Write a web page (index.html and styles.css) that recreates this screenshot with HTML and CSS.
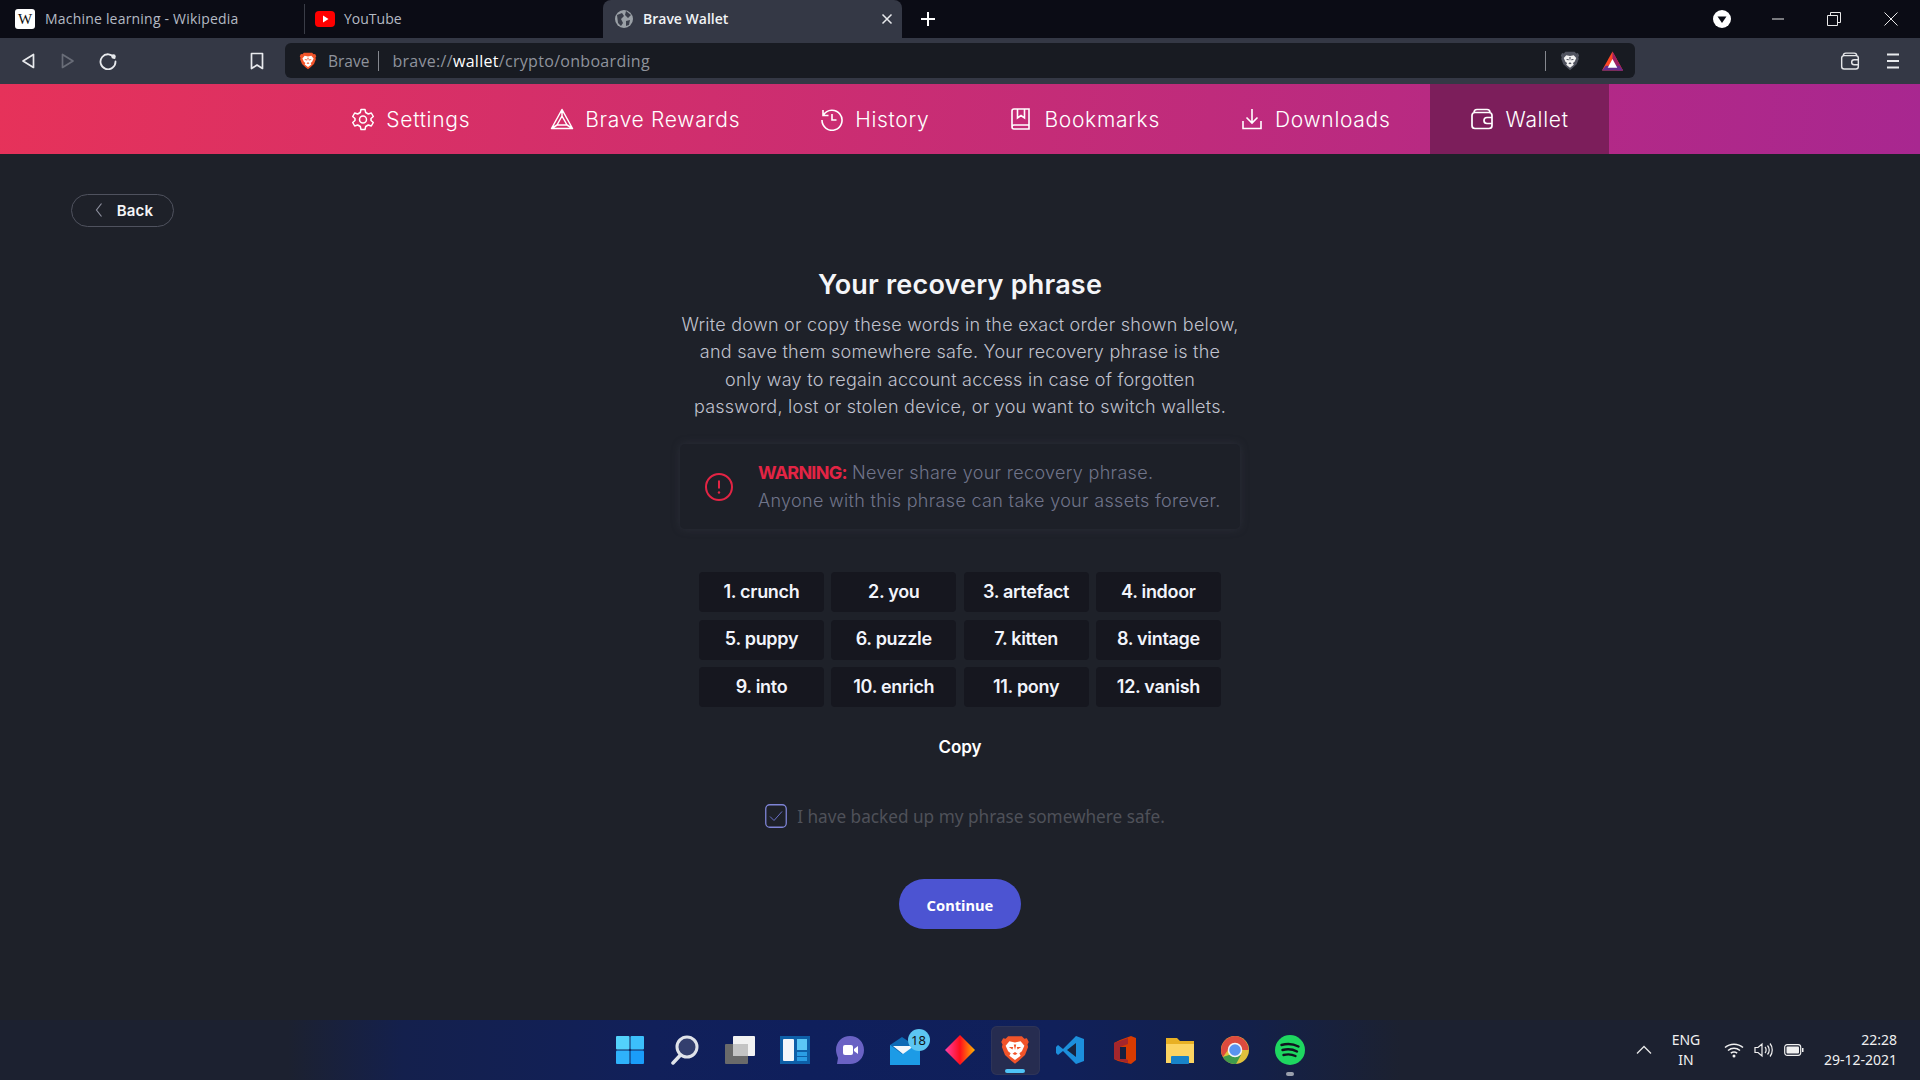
FILE: index.html
```html
<!DOCTYPE html>
<html lang="en">
<head>
<meta charset="utf-8">
<title>Brave Wallet</title>
<link rel="stylesheet" href="styles.css">
</head>
<body>
<svg class="defs" width="0" height="0" aria-hidden="true">
  <symbol id="brave" viewBox="0 0 24 24">
    <path class="shield" d="M6.500 1H17.500L19.500 3L21.500 2.500L23 5.500L22 7.500L22.500 9.500L20 16L15 20.500L12 23L9 20.500L4 16L1.500 9.500L2 7.500L1 5.500L2.500 2.500L4.500 3Z"/>
    <path class="lion" d="M7.500 5L12 6L16.500 5L19.500 8.500L17.500 13L15.500 14.500L16.500 16.500L12 20L7.500 16.500L8.500 14.500L6.500 13L4.500 8.500Z"/>
    <path class="shield" d="M7 9.500L10.500 9.500L10 11.500ZM17 9.500L13.500 9.500L14 11.500ZM10 15L12 16L14 15L12 13.500ZM11 7.500H13L12 12Z"/>
  </symbol>
  <symbol id="wallet" viewBox="0 0 24 24">
    <path d="M5 5.500C3 5.500 2 6.500 2 8.500V18.500C2 20.500 3 21.500 5 21.500H19C21 21.500 22 20.500 22 18.500V8.500C22 6.500 21 5.500 19 5.500Z M4 5.500C4 3.500 5 2.500 7 2.500H17C19 2.500 20 3.500 20 5.500 M22 10.500H17C15 10.500 14 11.500 14 13.500C14 15.500 15 16.500 17 16.500H22" fill="none" stroke="currentColor" stroke-width="1.700"/>
  </symbol>
</svg>

<header class="tabstrip">
  <div class="tab tab-first">
    <span class="wiki">W</span>
    <span class="tab-title">Machine learning - Wikipedia</span>
  </div>
  <div class="tab tab-second">
    <svg class="fav" viewBox="0 0 20 20"><rect x="0" y="2" width="20" height="16" rx="4" fill="#f00"/><path d="M8 6.500L13.500 10L8 13.500Z" fill="#fff"/></svg>
    <span class="tab-title">YouTube</span>
  </div>
  <div class="tab tab-active">
    <svg class="fav" viewBox="0 0 20 20"><circle cx="10" cy="10" r="9" fill="#9aa0a6"/><path d="M3 6L8 4L10 7L7 10L9 14L7 17L4 14ZM12 2L17 6L14 9L11 6ZM12 12L16 11L15 16L12 17Z" fill="#3a3e4a"/></svg>
    <span class="tab-title tab-strong">Brave Wallet</span>
    <svg class="tab-x" viewBox="0 0 12 12"><path d="M1.500 1.500L10.500 10.500M10.500 1.500L1.500 10.500" stroke="#e8eaed" stroke-width="1.500"/></svg>
  </div>
  <svg class="new-tab" viewBox="0 0 16 16"><path d="M8 1V15M1 8H15" stroke="#fff" stroke-width="2"/></svg>
  <div class="win">
    <svg class="win-profile" viewBox="0 0 18 18"><circle cx="9" cy="9" r="9" fill="#fff"/><path d="M4.500 6.500H13.500L9 13Z" fill="#0b0c15"/></svg>
    <svg class="win-btn" viewBox="0 0 14 14"><path d="M1 7H13" stroke="#e8e8e8" stroke-width="1"/></svg>
    <svg class="win-btn win-restore" viewBox="0 0 14 14"><path d="M.5 3.500H10.500V13.500H.5Z M3.500 3.500V.5H13.500V10.500H10.500" fill="none" stroke="#e8e8e8" stroke-width="1"/></svg>
    <svg class="win-btn" viewBox="0 0 14 14"><path d="M.5.5L13.500 13.500M13.500.5L.5 13.500" stroke="#e8e8e8" stroke-width="1"/></svg>
  </div>
</header>

<div class="toolbar">
  <svg class="tool tool-back" viewBox="0 0 16 16"><path d="M13.500 1.500V14.500L3 8Z" fill="none" stroke="#e8eaed" stroke-width="1.700" stroke-linejoin="round"/></svg>
  <svg class="tool tool-forward" viewBox="0 0 16 16"><path d="M2.500 1.500V14.500L13 8Z" fill="none" stroke="#696d78" stroke-width="1.700" stroke-linejoin="round"/></svg>
  <svg class="tool tool-reload" viewBox="0 0 18 18"><path d="M15.500 6A7.500 7.500 0 1 0 16.500 9.500" fill="none" stroke="#e8eaed" stroke-width="1.800" stroke-linecap="round"/><circle cx="14.500" cy="4.500" r="2.200" fill="#e8eaed"/></svg>
  <svg class="tool tool-mark" viewBox="0 0 14 18"><path d="M1.500 1.500H12.500V16.500L7 13L1.500 16.500Z" fill="none" stroke="#e8eaed" stroke-width="1.700" stroke-linejoin="round"/></svg>
  <div class="omnibox">
    <svg class="omni-brave brave-color"><use href="#brave"/></svg>
    <span class="omni-name">Brave</span>
    <span class="omni-sep"></span>
    <span class="omni-url">brave://<b>wallet</b>/crypto/onboarding</span>
    <span class="omni-sep omni-sep-right"></span>
    <svg class="omni-shield brave-gray"><use href="#brave"/></svg>
    <svg class="omni-bat" viewBox="0 0 24 22"><path d="M12 1L23 21H1Z" fill="#ff4724"/><path d="M12 1L23 21H17L12 11Z" fill="#9e1f63"/><path d="M1 21L5 16H19L23 21Z" fill="#662d91"/><path d="M12 9L17 18H7Z" fill="#fff"/></svg>
  </div>
  <svg class="tool tool-wallet"><use href="#wallet"/></svg>
  <svg class="tool tool-menu" viewBox="0 0 12 16"><path d="M0 1.500H12M0 8H12M0 14.500H12" stroke="#e8eaed" stroke-width="1.800"/></svg>
</div>

<nav class="nav">
  <a class="nav-item">
    <svg class="nav-icon" viewBox="0 0 24 24"><path d="M10 2.500H14L14.700 5.500L17.300 7L20.300 6L22.300 9.500L20 11.500V13.500L22.300 15.500L20.300 19L17.300 18L14.700 19.500L14 22.500H10L9.300 19.500L6.700 18L3.700 19L1.700 15.500L4 13.500V11.500L1.700 9.500L3.700 6L6.700 7L9.300 5.500Z" fill="none" stroke="currentColor" stroke-width="1.500" stroke-linejoin="round"/><circle cx="12" cy="12.500" r="3.500" fill="none" stroke="currentColor" stroke-width="1.500"/></svg>
    <span>Settings</span>
  </a>
  <a class="nav-item">
    <svg class="nav-icon" viewBox="0 0 24 24"><path d="M12 2.500L22.500 21.500H1.500Z M12 9L17 18H7Z M1.500 21.500L7 18M22.500 21.500L17 18M12 2.500V9" fill="none" stroke="currentColor" stroke-width="1.500" stroke-linejoin="round"/></svg>
    <span>Brave Rewards</span>
  </a>
  <a class="nav-item">
    <svg class="nav-icon" viewBox="0 0 24 24"><path d="M3.500 8A10 10 0 1 1 2 13 M3 3V8.500H8.500 M12 7V13L16.500 13" fill="none" stroke="currentColor" stroke-width="1.600"/></svg>
    <span>History</span>
  </a>
  <a class="nav-item">
    <svg class="nav-icon" viewBox="0 0 24 24"><path d="M5 2H20V18H5C3.500 18 3 19 3 20C3 21 3.500 22 5 22H20V18 M3 20V4C3 3 4 2 5 2 M8.500 2V11L12 8.500L15.500 11V2" fill="none" stroke="currentColor" stroke-width="1.600"/></svg>
    <span>Bookmarks</span>
  </a>
  <a class="nav-item">
    <svg class="nav-icon" viewBox="0 0 24 24"><path d="M12 2V16M6.500 10.500L12 16L17.500 10.500M3 14V21.500H21V14" fill="none" stroke="currentColor" stroke-width="1.600"/></svg>
    <span>Downloads</span>
  </a>
  <a class="nav-item nav-current">
    <svg class="nav-icon"><use href="#wallet"/></svg>
    <span>Wallet</span>
  </a>
</nav>

<main class="page">
  <button class="back">
    <svg class="back-icon" viewBox="0 0 8 16"><path d="M6.500 1.500L1.500 8L6.500 14.500" fill="none" stroke="#8b8e9c" stroke-width="1.200"/></svg>
    <span>Back</span>
  </button>
  <section class="content">
    <h1 class="title">Your recovery phrase</h1>
    <p class="lead">Write down or copy these words in the exact order shown below, and save them somewhere safe. Your recovery phrase is the only way to regain account access in case of forgotten password, lost or stolen device, or you want to switch wallets.</p>
    <div class="warning">
      <svg class="warning-icon" viewBox="0 0 28 28"><circle cx="14" cy="14" r="13" fill="none" stroke="#e32444" stroke-width="2"/><path d="M14 7.500V15.500" stroke="#e32444" stroke-width="2"/><circle cx="14" cy="19.500" r="1.200" fill="#e32444"/></svg>
      <p class="warning-text"><strong>WARNING:</strong> Never share your recovery phrase.<br>Anyone with this phrase can take your assets forever.</p>
    </div>
    <div class="words">
      <div class="word">1. crunch</div>
      <div class="word">2. you</div>
      <div class="word">3. artefact</div>
      <div class="word">4. indoor</div>
      <div class="word">5. puppy</div>
      <div class="word">6. puzzle</div>
      <div class="word">7. kitten</div>
      <div class="word">8. vintage</div>
      <div class="word">9. into</div>
      <div class="word">10. enrich</div>
      <div class="word">11. pony</div>
      <div class="word">12. vanish</div>
    </div>
    <div class="copy">Copy</div>
    <label class="agree">
      <svg class="check" viewBox="0 0 22 24"><rect x=".75" y=".75" width="20.500" height="22.500" rx="4" fill="none" stroke="#7e84d6" stroke-width="1.300"/><path d="M5 12.500L9 16.500L17 7.500" fill="none" stroke="#6a70c8" stroke-width="1"/></svg>
      <span>I have backed up my phrase somewhere safe.</span>
    </label>
    <button class="continue">Continue</button>
  </section>
</main>

<footer class="taskbar">
  <div class="task-spacer"></div>
  <div class="task-icons">
    <span class="task"><svg viewBox="0 0 30 30"><rect x="1" y="1" width="13.500" height="13.500" rx="1" fill="#53d2fb"/><rect x="15.500" y="1" width="13.500" height="13.500" rx="1" fill="#3cc0fb"/><rect x="1" y="15.500" width="13.500" height="13.500" rx="1" fill="#2fb2fb"/><rect x="15.500" y="15.500" width="13.500" height="13.500" rx="1" fill="#1a9dfa"/></svg></span>
    <span class="task"><svg viewBox="0 0 30 30"><circle cx="17" cy="12" r="10" fill="#333f6e" stroke="#dfe3ea" stroke-width="3"/><path d="M10.500 20L3 28" stroke="#dfe3ea" stroke-width="3.500" stroke-linecap="round"/></svg></span>
    <span class="task"><svg viewBox="0 0 30 30"><rect x="0" y="9" width="23" height="20" rx="1" fill="#6a6a6a"/><rect x="8" y="1" width="22" height="20" rx="1" fill="#f2f2f2"/><rect x="8" y="9" width="15" height="12" fill="#c4c4c4"/></svg></span>
    <span class="task"><svg viewBox="0 0 30 30"><rect x="0" y="1" width="30" height="28" fill="#0e5fa8"/><rect x="3" y="4" width="11" height="22" rx="1" fill="#f4f7fb"/><rect x="17" y="4" width="10" height="11" fill="#5cc8f5"/><rect x="17" y="17" width="10" height="4" fill="#2a9de4"/><rect x="17" y="22" width="10" height="4" fill="#2a9de4"/></svg></span>
    <span class="task"><svg viewBox="0 0 30 30"><path d="M15 1C23 1 29 7 29 15C29 23 23 29 15 29H2L3 23C2 20 1 18 1 15C1 7 7 1 15 1Z" fill="#6a62c4"/><rect x="8" y="10" width="10" height="10" rx="2" fill="#fff"/><path d="M19 14L23 11V19L19 16Z" fill="#fff"/></svg></span>
    <span class="task"><svg viewBox="0 0 30 30"><rect x="0" y="10" width="30" height="20" fill="#1c9be6"/><path d="M0 10L12 2L24 10L12 19Z" fill="#0d6ab5"/><path d="M3 11H24L13 19Z" fill="#f2f7fb"/></svg><em class="badge">18</em></span>
    <span class="task"><svg viewBox="0 0 30 30"><defs><linearGradient id="dia" x1="0" x2="1" y1="0" y2="0"><stop offset="0" stop-color="#ff3fa8"/><stop offset=".5" stop-color="#ff0f1c"/><stop offset="1" stop-color="#ffb400"/></linearGradient></defs><path d="M15 0L30 15L15 30L0 15Z" fill="url(#dia)"/></svg></span>
    <span class="task task-on"><svg class="brave-color"><use href="#brave"/></svg><i class="task-bar"></i></span>
    <span class="task"><svg viewBox="0 0 30 30"><path d="M21 1L29 4V26L21 29L8 16L3 20L1 18V12L3 10L8 14Z" fill="#1c8fdc"/><path d="M21 8L12 15L21 22Z" fill="#17243f"/></svg></span>
    <span class="task"><svg viewBox="0 0 30 30"><path d="M10 5L21 1L26 3V25L21 29L8 26L4 24V8Z" fill="#d83b01"/><path d="M4 8L18 3V9L10 12V22L18 25V28L4 24Z" fill="#a4262c"/><path d="M10 12H16V24H10Z" fill="#17203f"/></svg></span>
    <span class="task"><svg viewBox="0 0 30 30"><path d="M1 3H12L15 6H29V28H1Z" fill="#e8b024"/><rect x="1" y="9" width="28" height="19" fill="#fcd462"/><rect x="6" y="21" width="18" height="8" rx="1" fill="#1883c9"/></svg></span>
    <span class="task"><svg viewBox="0 0 30 30"><circle cx="15" cy="15" r="14" fill="#e0c13c"/><path d="M15 1A14 14 0 0 0 2.900 22L8 15H28.500A14 14 0 0 0 15 1Z" fill="#dd4b3e"/><path d="M2.900 22A14 14 0 0 0 16 29L21 20H9Z" fill="#3f9b4c"/><circle cx="15" cy="15" r="6.500" fill="#5a93ef" stroke="#f4f4f4" stroke-width="1.500"/></svg></span>
    <span class="task"><svg viewBox="0 0 30 30"><circle cx="15" cy="15" r="15" fill="#1ed760"/><path d="M6.500 10C12 8.500 18.500 9 23.500 11.500M7.500 15C12 13.800 18 14.300 22 16.500M8.500 20C12.500 19 17 19.300 20.500 21" fill="none" stroke="#10131f" stroke-width="2.400" stroke-linecap="round"/></svg><i class="task-dot"></i></span>
  </div>
  <div class="tray">
    <svg class="tray-chevron" viewBox="0 0 16 10"><path d="M1 8.500L8 1.500L15 8.500" fill="none" stroke="#e6e6e6" stroke-width="1.300"/></svg>
    <div class="tray-lang">ENG<br>IN</div>
    <svg class="tray-wifi" viewBox="0 0 20 16"><path d="M1 5.500C6 1 14 1 19 5.500M4 8.500C7.500 5.500 12.500 5.500 16 8.500M6.800 11.200C8.500 10 11.500 10 13.200 11.200" fill="none" stroke="#f0f0f0" stroke-width="1.500"/><circle cx="10" cy="14" r="1.500" fill="#f0f0f0"/></svg>
    <svg class="tray-vol" viewBox="0 0 20 16"><path d="M1 5.500H4L8 2V14L4 10.500H1Z M11 5C12.500 6.500 12.500 9.500 11 11M13.500 3.500C15.800 6 15.800 10 13.500 12.500M16 1.500C19 5 19 11 16 14.500" fill="none" stroke="#f0f0f0" stroke-width="1.200"/></svg>
    <svg class="tray-bat" viewBox="0 0 20 14"><rect x=".7" y="1.700" width="16" height="10.600" rx="2.500" fill="none" stroke="#f0f0f0" stroke-width="1.200"/><rect x="2.500" y="3.500" width="12.500" height="7" rx="1" fill="#f0f0f0"/><rect x="18" y="5" width="1.500" height="4" fill="#f0f0f0"/></svg>
    <div class="tray-clock">22:28<br>29-12-2021</div>
  </div>
</footer>
</body>
</html>
```

FILE: styles.css
```css
* { box-sizing: border-box; }
html, body { margin: 0; padding: 0; }
body {
  width: 1920px;
  height: 1080px;
  overflow: hidden;
  display: flex;
  flex-direction: column;
  background: #1e2129;
  font-family: "Inter", "Liberation Sans", sans-serif;
}
.defs { position: absolute; }
.shield { fill: var(--shield); }
.lion { fill: var(--lion); }
.brave-color { --shield: #f1542a; --lion: #fff; }
.brave-gray { --shield: #50535f; --lion: #f2f2f2; }

/* tab strip */
.tabstrip {
  height: 38px;
  flex: none;
  display: flex;
  align-items: stretch;
  background: #0b0c15;
  font-family: "Open Sans", "Noto Sans", sans-serif;
  font-size: 14px;
}
.tab { display: flex; align-items: center; }
.tab-first { width: 305px; padding-left: 15px; border-right: 1px solid #3a3d47; margin: 4px 0 0; height: 30px; align-self: flex-start; }
.tab-second { width: 298px; padding-left: 10px; height: 30px; margin-top: 4px; }
.tab-active {
  width: 299px;
  padding-left: 11px;
  background: #343845;
  border-radius: 8px 8px 0 0;
  position: relative;
}
.wiki {
  width: 20px; height: 20px; flex: none;
  background: #fff; border-radius: 3px; color: #111;
  font: 15px/20px "Liberation Serif", serif;
  text-align: center;
}
.fav { width: 20px; height: 20px; flex: none; }
.tab-title { margin: 0 0 2px 10px; color: #b4bac4; white-space: nowrap; letter-spacing: .2px; }
.tab-second .tab-title { margin-left: 9px; letter-spacing: 0; }
.tab-strong { color: #f1f3f5; font-weight: 600; margin-left: 9px; letter-spacing: 0; }
.tab-x { width: 12px; height: 12px; margin-left: auto; margin-right: 9px; }
.new-tab { width: 16px; height: 16px; margin: 11px 0 0 18px; }
.win { margin-left: auto; display: flex; align-items: center; padding-right: 22px; }
.win-profile { width: 18px; height: 18px; margin-right: 40px; }
.win-btn { width: 14px; height: 14px; margin-right: 42px; }
.win-restore { margin-right: 43px; }
.win-btn:last-child { margin-right: 0; }

/* toolbar */
.toolbar {
  height: 46px;
  flex: none;
  display: flex;
  align-items: center;
  background: #343845;
  padding: 0 0 1px 20px;
}
.tool { width: 16px; height: 16px; flex: none; }
.tool-back { margin-right: 24px; }
.tool-forward { margin-right: 23px; }
.tool-reload { width: 18px; height: 18px; }
.tool-mark { margin-left: 133px; margin-right: 21px; width: 14px; height: 18px; }
.omnibox {
  width: 1350px;
  height: 35px;
  border-radius: 6px;
  background: #181b22;
  display: flex;
  align-items: center;
  padding-left: 14px;
  font: 16px "Open Sans", "Noto Sans", sans-serif;
  color: #8f939c;
}
.omni-brave { width: 18px; height: 20px; flex: none; }
.omni-name { margin-left: 11px; font-size: 15.500px; }
.omni-sep { width: 1px; height: 20px; background: #85888f; margin-left: 9px; }
.omni-url { margin-left: 13px; letter-spacing: .3px; }
.omni-url b { color: #fff; font-weight: 400; }
.omni-sep-right { margin-left: auto; }
.omni-shield { width: 20px; height: 22px; margin-left: 14px; }
.omni-bat { width: 23px; height: 22px; margin: 0 11px 0 21px; }
.tool-wallet { width: 20px; height: 20px; margin-left: 205px; color: #e4e5e8; }
.tool-menu { width: 12px; height: 16px; margin-left: 27px; }

/* gradient nav */
.nav {
  height: 70px;
  flex: none;
  display: flex;
  justify-content: center;
  background: linear-gradient(96deg, #e6325a 0%, #a82790 100%);
}
.nav-item {
  display: flex;
  align-items: center;
  gap: 11px;
  padding: 0 40px;
  color: #fff;
  font-size: 21px;
  font-weight: 300;
  letter-spacing: .7px;
  white-space: nowrap;
}
.nav-icon { width: 24px; height: 24px; flex: none; }
.nav-current { background: #7c1e5b; }

/* page */
.page { flex: 1; padding: 40px 0 0 71px; position: relative; display: flex; flex-direction: column; }
.back {
  width: 103px;
  height: 33px;
  flex: none;
  background: none;
  border: 1px solid #4f525e;
  border-radius: 17px;
  color: #f5f5f7;
  font: 600 15px "Inter", sans-serif;
  letter-spacing: .2px;
  display: flex;
  align-items: center;
  justify-content: center;
  gap: 14px;
  padding: 0 0 1px 3px;
}
.back-icon { width: 8px; height: 16px; }
.content {
  width: 600px;
  margin: 39px 0 0 589px;
  display: flex;
  flex-direction: column;
  align-items: center;
  text-align: center;
}
.title {
  margin: 1px 0 0;
  font-size: 27px;
  line-height: 36px;
  font-weight: 600;
  color: #f4f5f8;
  letter-spacing: .2px;
}
.lead {
  width: 560px;
  margin: 8px 0 0;
  font-size: 18px;
  line-height: 27.300px;
  font-weight: 300;
  color: #c0c2ce;
  letter-spacing: .25px;
}
.warning {
  width: 560px;
  height: 85px;
  margin-top: 24px;
  background: #1d2028;
  border-radius: 5px;
  box-shadow: 0 0 8px rgba(60, 63, 75, .45);
  display: flex;
  align-items: center;
  padding-left: 25px;
}
.warning-icon { width: 28px; height: 28px; flex: none; }
.warning-text {
  margin: 0 0 0 25px;
  text-align: left;
  font-size: 18px;
  line-height: 28px;
  font-weight: 300;
  color: #70748a;
  white-space: nowrap;
  letter-spacing: .32px;
}
.warning-text strong { color: #e32444; font-weight: 700; letter-spacing: -.75px; }
.words {
  width: 522px;
  margin-top: 43px;
  display: grid;
  grid-template-columns: repeat(4, 125px);
  grid-auto-rows: 40px;
  gap: 7.500px 7.300px;
}
.word {
  background: #16171f;
  border-radius: 4px;
  display: flex;
  align-items: center;
  justify-content: center;
  padding-bottom: 2px;
  color: #f2f4fb;
  font-size: 18px;
  font-weight: 600;
  letter-spacing: -.3px;
}
.copy {
  margin-top: 28px;
  line-height: 24px;
  font-size: 17px;
  font-weight: 600;
  color: #fff;
}
.agree {
  margin: 45px 0 0 10px;
  display: flex;
  align-items: center;
  gap: 10px;
  font: 400 17.200px/23px "Noto Sans", sans-serif;
  color: #4f5159;
  white-space: nowrap;
}
.check { width: 22px; height: 24px; flex: none; }
.continue {
  width: 122px;
  height: 50px;
  margin-top: 51px;
  background: #4c54d2;
  color: #fff;
  border: 0;
  border-radius: 25px;
  padding-top: 2px;
  font: 700 14.700px "Noto Sans", sans-serif;
}

/* taskbar */
.taskbar {
  height: 60px;
  flex: none;
  display: grid;
  grid-template-columns: 1fr auto 1fr;
  align-items: center;
  background: linear-gradient(90deg, #1c2130 0%, #1c2130 15%, #14204d 21%, #11205a 34%, #0f1f5c 42%, #10205a 55%, #13204a 65%, #1c2130 73%);
}
.task-icons { display: flex; gap: 0; }
.task {
  width: 55px;
  height: 49px;
  display: flex;
  align-items: center;
  justify-content: center;
  position: relative;
  border-radius: 6px;
}
.task svg { width: 30px; height: 30px; }
.task-on { width: 49px; margin: 0 3px; background: #262c50; box-shadow: inset 0 0 0 1px #2e3458; }
.task-bar {
  position: absolute; left: 50%; bottom: 2px;
  width: 20px; height: 4px; margin-left: -10px;
  border-radius: 2px; background: #4fc3f7;
}
.task-dot {
  position: absolute; left: 50%; bottom: -1px;
  width: 8px; height: 4px; margin-left: -4px;
  border-radius: 2px; background: #9aa0ad;
}
.badge {
  position: absolute; right: 3px; top: 3px;
  width: 22px; height: 22px; border-radius: 50%;
  background: #5cc6f2; color: #111;
  font: 13px/22px "Noto Sans", sans-serif; text-align: center;
}
.tray {
  justify-self: end;
  display: flex;
  align-items: center;
  height: 100%;
  font: 14px/20px "Noto Sans", sans-serif;
  color: #f0f0f0;
  padding-right: 23px;
}
.tray-chevron { width: 16px; height: 10px; }
.tray-lang { width: 50px; margin-left: 9px; text-align: center; }
.tray-wifi { width: 20px; height: 16px; margin-left: 13px; }
.tray-vol { width: 20px; height: 16px; margin-left: 10px; }
.tray-bat { width: 20px; height: 14px; margin-left: 10px; }
.tray-clock { margin-left: 15px; text-align: right; width: 78px; }
```
